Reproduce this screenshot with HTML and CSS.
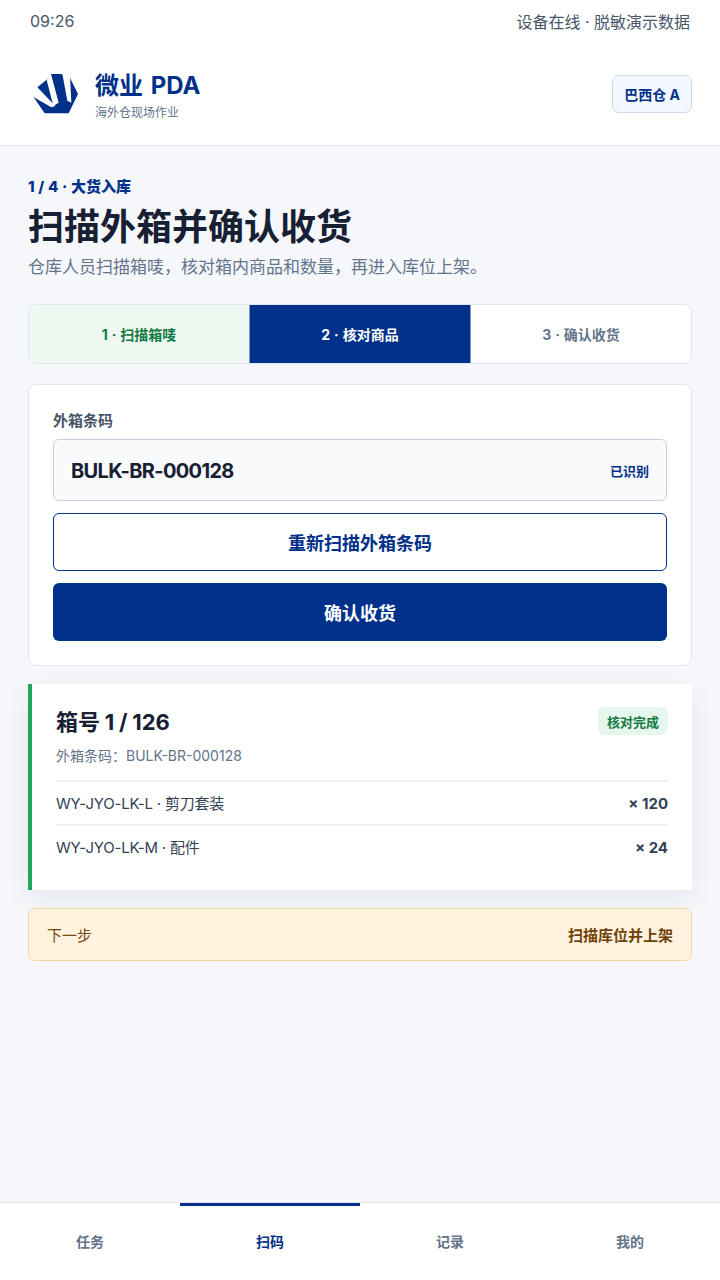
FILE: index.html
```html
<!DOCTYPE html>
<html lang="zh-CN">
<head>
<meta charset="utf-8">
<title>微业 PDA</title>
<link rel="stylesheet" href="styles.css">
</head>
<body>
<div class="app">
  <div class="status"><span>09:26</span><span>设备在线 · 脱敏演示数据</span></div>
  <header class="header">
    <div class="brand">
      <svg class="logo" viewBox="6 0 150 144" aria-hidden="true">
        <path fill="#00318a" d="M68 12 L100 12 L125 22 L150 72 L122 130 L50 130 L12 74 L30 50 L55 30 Z"/>
        <path fill="#fff" d="M4 74 L28 52 L82 108 L70 112 Z"/>
        <path fill="#fff" d="M56 30 L68 8 L92 98 L76 108 Z"/>
        <path fill="#fff" d="M102 6 L126 18 L130 98 L118 92 Z"/>
      </svg>
      <div class="brand-text">
        <div class="brand-name">微业 PDA</div>
        <div class="brand-sub">海外仓现场作业</div>
      </div>
    </div>
    <div class="warehouse">巴西仓 A</div>
  </header>
  <main class="main">
    <div class="eyebrow">1 / 4 · 大货入库</div>
    <h1 class="title">扫描外箱并确认收货</h1>
    <p class="desc">仓库人员扫描箱唛，核对箱内商品和数量，再进入库位上架。</p>
    <div class="steps">
      <div class="step step-done">1 · 扫描箱唛</div>
      <div class="step step-active">2 · 核对商品</div>
      <div class="step">3 · 确认收货</div>
    </div>
    <section class="card">
      <div class="label">外箱条码</div>
      <div class="field"><span class="field-value">BULK-BR-000128</span><span class="field-state">已识别</span></div>
      <button class="btn btn-outline">重新扫描外箱条码</button>
      <button class="btn btn-primary">确认收货</button>
    </section>
    <section class="box">
      <div class="box-head">
        <div>
          <div class="box-title">箱号 1 / 126</div>
          <div class="box-code">外箱条码：BULK-BR-000128</div>
        </div>
        <span class="badge">核对完成</span>
      </div>
      <div class="row"><span class="row-name">WY-JYO-LK-L · 剪刀套装</span><strong>× 120</strong></div>
      <div class="row"><span class="row-name">WY-JYO-LK-M · 配件</span><strong>× 24</strong></div>
    </section>
    <div class="next"><span>下一步</span><strong>扫描库位并上架</strong></div>
  </main>
  <nav class="nav">
    <div class="tab">任务</div>
    <div class="tab tab-active">扫码</div>
    <div class="tab">记录</div>
    <div class="tab">我的</div>
  </nav>
</div>
</body>
</html>
```
FILE: styles.css
```css
* { box-sizing: border-box; }
html, body { margin: 0; padding: 0; }
body {
  background: #f5f7fb;
  color: #172033;
  font-family: Inter, "Noto Sans CJK SC", sans-serif;
}
.app { width: 720px; height: 1280px; display: flex; flex-direction: column; overflow: hidden; }
.status {
  height: 42px; background: #fff; padding: 0 30px;
  display: flex; justify-content: space-between; align-items: center;
  font-size: 16px; color: #475569;
}
.header {
  height: 104px; background: #fff; border-bottom: 1px solid #dfe5ef;
  padding: 0 28px 0 30px;
  display: flex; justify-content: space-between; align-items: center;
}
.brand { display: flex; align-items: center; gap: 15px; }
.logo { width: 50px; height: 48px; display: block; }
.brand-text { padding-top: 6px; }
.brand-name { font-size: 24px; line-height: 30px; font-weight: 700; color: #00318a; word-spacing: 2px; }
.brand-sub { font-size: 12px; line-height: 18px; margin-top: 3px; color: #64748b; }
.warehouse {
  height: 38px; padding: 0 11px; display: flex; align-items: center;
  background: #f3f7ff; border: 1px solid #cbd9ea; border-radius: 7px;
  font-size: 14px; font-weight: 700; color: #00318a;
}
.main { flex: 1; padding: 31px 28px 0; }
.eyebrow { font-size: 15px; line-height: 20px; font-weight: 800; word-spacing: 0.4px; color: #00318a; }
.title { margin: 8px 0 0; font-size: 36px; line-height: 44px; font-weight: 700; color: #172033; }
.desc { margin: 5px 0 0; font-size: 17px; line-height: 26px; color: #64748b; }
.steps {
  margin-top: 24px; height: 60px; display: grid; grid-template-columns: 220px 222px 1fr;
  background: #fff; border: 1px solid #dfe7f1; border-radius: 8px; overflow: hidden;
}
.step {
  display: flex; align-items: center; justify-content: center;
  font-size: 14px; font-weight: 700; word-spacing: 0.6px; color: #64748b;
}
.step-done { background: #eef8f1; color: #137a45; }
.step-active { background: #00318a; color: #fff; border-left: 1px solid #7f98c4; border-right: 1px solid #7f98c4; }
.card {
  margin-top: 20px; height: 282px; padding: 24px; background: #fff;
  border: 1px solid #dfe7f1; border-radius: 8px;
  display: flex; flex-direction: column;
}
.label { font-size: 15px; line-height: 24px; margin-bottom: -2px; font-weight: 600; color: #475569; }
.field {
  margin-top: 8px; height: 62px; padding: 0 17px;
  display: flex; justify-content: space-between; align-items: center;
  background: #f8fafc; border: 1px solid #c0d0e2; border-radius: 6px;
}
.field-value { margin-top: 2px; font-size: 20px; font-weight: 700; letter-spacing: -0.65px; color: #172033; }
.field-state { font-size: 13px; font-weight: 600; color: #00318a; }
.btn {
  font-family: inherit; font-size: 18px; font-weight: 700; height: 58px;
  border-radius: 6px; margin-top: 12px; padding: 0;
}
.btn-outline { background: #fff; color: #00318a; border: 1px solid #00318a; }
.btn-primary { background: #00318a; color: #fff; border: 0; }
.box {
  margin-top: 18px; height: 206px; padding: 22px 24px 0 24px;
  background: #fff; border-left: 4px solid #22a45d;
  box-shadow: 0 8px 24px rgba(23, 32, 51, 0.08);
}
.box-head { display: flex; justify-content: space-between; align-items: flex-start; height: 74px; }
.box-title { font-size: 22px; line-height: 32px; font-weight: 700; word-spacing: -0.5px; color: #172033; }
.box-code { margin-top: 8px; font-size: 14px; line-height: 20px; color: #64748b; }
.badge {
  height: 28px; padding: 0 9px; display: flex; align-items: center; margin-top: 1px;
  background: #e8f7ee; border-radius: 6px;
  font-size: 13px; font-weight: 600; color: #137a45;
}
.row {
  height: 44px; border-top: 2px solid #eef1f5; padding-top: 1px;
  display: flex; justify-content: space-between; align-items: center;
  font-size: 15px; color: #334155;
}
.row-name { margin-bottom: 2px; letter-spacing: -0.2px; }
.row strong { font-size: 15px; font-weight: 700; color: #334155; }
.next {
  margin-top: 18px; height: 53px; padding: 0 18px;
  display: flex; justify-content: space-between; align-items: center;
  background: #fff3df; border: 1px solid #f5d5a0; border-radius: 7px;
  font-size: 15px; color: #7a4a0f;
}
.next strong { font-weight: 700; color: #6f4106; }
.nav {
  height: 78px; background: #fff; border-top: 1px solid #dfe5ef;
  display: grid; grid-template-columns: repeat(4, 1fr);
}
.tab {
  display: flex; align-items: center; justify-content: center;
  border-top: 3px solid transparent; padding-bottom: 4px;
  font-size: 14px; font-weight: 700; color: #64748b;
}
.tab-active { border-top-color: #00318a; color: #00318a; }
```
